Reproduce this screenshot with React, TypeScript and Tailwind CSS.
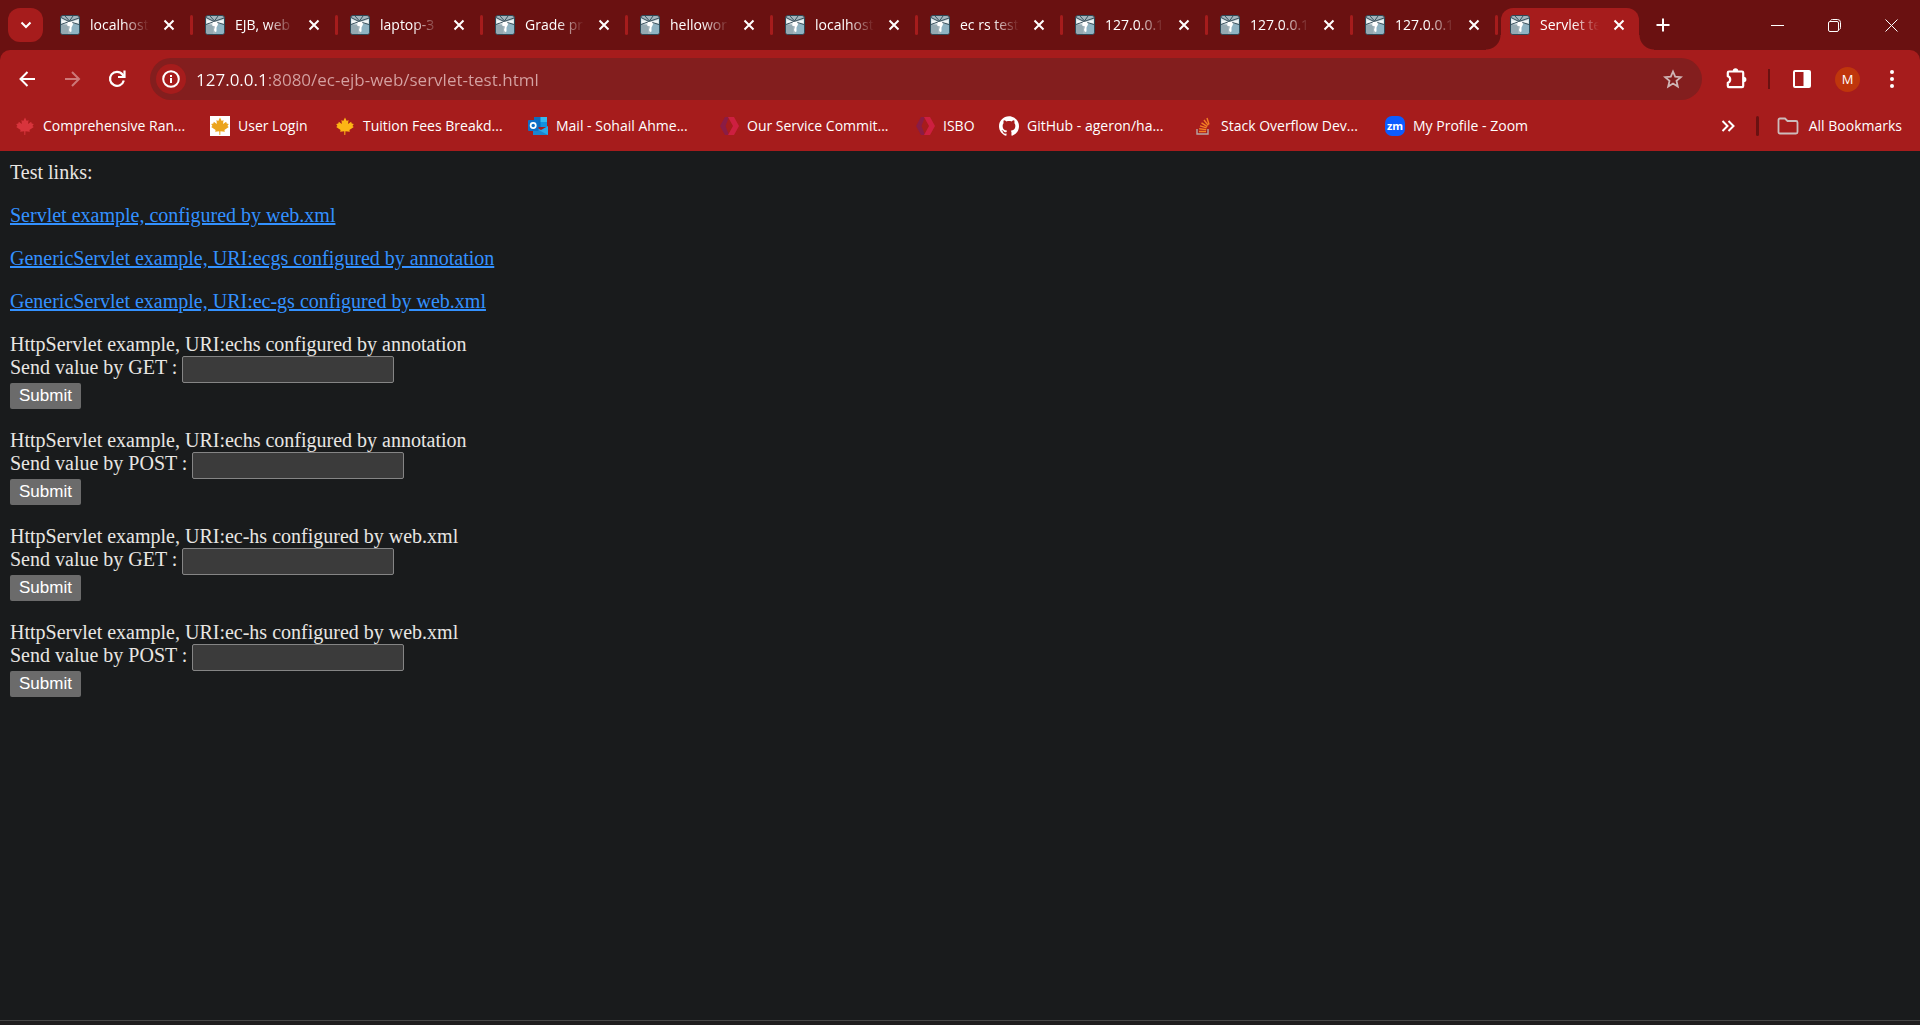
import React from "react";
import { SiGithub } from "react-icons/si";

const tabs = [
  "localhost",
  "EJB, web",
  "laptop-3",
  "Grade pr",
  "hellowor",
  "localhost",
  "ec rs test",
  "127.0.0.1",
  "127.0.0.1",
  "127.0.0.1",
  "Servlet te",
];

function WildFlyIcon() {
  return (
    <svg viewBox="0 0 20 20" className="size-5 shrink-0" aria-hidden="true">
      <rect x="0.5" y="0.5" width="19" height="19" rx="2.5" fill="#a3b4bc" stroke="#2f4a58" />
      <path d="M11 9h8v8q0 2-2 2h-6z" fill="#8fb3c3" />
      <path d="M1 10h7v9H3q-2 0-2-2z" fill="#95a9b2" />
      <path d="M1 3l7 3.500h3L19 4v5l-7-.5-3 1L1 9z" fill="#dbe4e8" />
      <path d="M1 2.500l8 4 10-3.500M1 9.500l8-3 10 3M5 1l4.500 5L13 1" fill="none" stroke="#3b525e" />
      <path d="M2 5.500l6 1-6 1.500zM18 5.500l-6 1 6 1.500z" fill="#f4f7f8" />
      <path d="M8 7l4-.5 1 3-1.500 3v4l-1.500.5-1-2 1-3.500-3-1z" fill="#fff" />
    </svg>
  );
}

function CloseIcon({ className }: { className: string }) {
  return (
    <svg viewBox="0 0 12 12" className={className} stroke="currentColor" strokeWidth="2" aria-hidden="true">
      <path d="M1.5 1.5l9 9M10.500 1.500l-9 9" />
    </svg>
  );
}

function Tab({ title, active }: { title: string; active: boolean }) {
  return (
    <div className="relative flex h-[42px] w-[145px] min-w-0 items-center pb-2 pl-3">
      {active && (
        <>
          <span className="absolute inset-y-0 right-[4px] left-[3px] rounded-t-xl bg-[#a61c1c]" />
          <span className="absolute bottom-0 -left-3 size-[15px] bg-[radial-gradient(circle_at_0_0,transparent_14px,#a61c1c_15px)]" />
          <span className="absolute -right-[11px] bottom-0 size-[15px] bg-[radial-gradient(circle_at_100%_0,transparent_14px,#a61c1c_15px)]" />
        </>
      )}
      <button className="relative flex min-w-0 items-center gap-[10px] text-left">
        <WildFlyIcon />
        <span className="w-[59px] overflow-hidden text-sm leading-5 whitespace-nowrap [mask-image:linear-gradient(to_right,#000_55%,transparent)]">
          {title}
        </span>
      </button>
      <button aria-label="Close tab" className="relative ml-[10px] grid size-5 shrink-0 place-items-center">
        <CloseIcon className="size-3" />
      </button>
      {!active && <span className="ml-auto h-5 w-[3px] shrink-0 rounded-full bg-[#a61c1c]" />}
    </div>
  );
}

const leaf =
  "M10 0l2 4 2-1-.6 4.6L17 5l.6 2 2.400.4-1.600 2.400L20 11l-5 3.400.5 1.800-5-.5-.2 4.300h-1l-.2-4.300-4.600.5.5-1.800L0 11l1.400-1.200L0 7.400 2.400 7 3 5l3.400 2.600L6 3l2 1z";

function MapleLeaf({ fill, boxed = false }: { fill: string; boxed?: boolean }) {
  return (
    <svg viewBox="0 0 20 20" className="size-5 shrink-0" aria-hidden="true">
      {boxed && <rect width="20" height="20" fill="#fff" />}
      <path d={leaf} fill={fill} transform="translate(1.2 1.4) scale(.88)" />
    </svg>
  );
}

function OutlookIcon() {
  return (
    <svg viewBox="0 0 20 20" className="size-5 shrink-0" aria-hidden="true">
      <path d="M6 1h13v10H6z" fill="#0f6cbd" />
      <path d="M12.500 1H19v5h-6.500z" fill="#35b8f1" />
      <path d="M12.500 6H19v5h-6.500z" fill="#1490df" />
      <path d="M5 10l8 4 7-4v9H5z" fill="#28a8ea" />
      <path d="M5 11l15 8H5z" fill="#1a86d0" />
      <rect y="4" width="10.500" height="11" rx="1" fill="#0f6fc6" />
      <circle cx="5.200" cy="9.500" r="2.600" fill="none" stroke="#fff" strokeWidth="1.700" />
    </svg>
  );
}

function HexIcon() {
  return (
    <svg viewBox="0 0 20 20" className="size-5 shrink-0" aria-hidden="true">
      <path d="M6 1h4L6.500 10 10 19H6L1 10z" fill="#8a1c45" />
      <path d="M9 1h6l5 9-5 9H9l5-9z" fill="#cd1f40" />
    </svg>
  );
}

function StackOverflowIcon() {
  return (
    <svg viewBox="0 0 20 20" className="size-5 shrink-0" fill="none" aria-hidden="true">
      <path d="M4 13v5h11v-5" stroke="#b5a6a6" strokeWidth="1.400" />
      <path
        d="M6 15.500h7M6.200 12.800l7 .8M7 9.800l6.600 2M8.500 6.800l5.800 3.800M11 4l4.200 5.400M14 2l2 6.500"
        stroke="#f48024"
        strokeWidth="1.400"
      />
    </svg>
  );
}

function ZoomIcon() {
  return (
    <span className="grid size-5 shrink-0 place-items-center rounded-[7px] bg-[#0b5cff] text-[11px] leading-3 font-bold" aria-hidden="true">
      zm
    </span>
  );
}

const bookmarks = [
  { label: "Comprehensive Ran...", icon: <MapleLeaf fill="#d8343c" />, width: "w-[195px]" },
  { label: "User Login", icon: <MapleLeaf fill="#eba41c" boxed />, width: "w-[125px]" },
  { label: "Tuition Fees Breakd...", icon: <MapleLeaf fill="#fdb515" />, width: "w-[193px]" },
  { label: "Mail - Sohail Ahme...", icon: <OutlookIcon />, width: "w-[191px]" },
  { label: "Our Service Commit...", icon: <HexIcon />, width: "w-[196px]" },
  { label: "ISBO", icon: <HexIcon />, width: "w-[84px]" },
  { label: "GitHub - ageron/ha...", icon: <SiGithub className="size-5 shrink-0" />, width: "w-[194px]" },
  { label: "Stack Overflow Dev...", icon: <StackOverflowIcon />, width: "w-[192px]" },
  { label: "My Profile - Zoom", icon: <ZoomIcon />, width: "w-[160px]" },
];

function TabStrip() {
  return (
    <div className="flex h-[50px] items-end">
      <button aria-label="Search tabs" className="mr-[5px] mb-2 ml-2 grid h-[34px] w-[35px] shrink-0 place-items-center rounded-xl bg-[#a61c1c]">
        <svg viewBox="0 0 12 8" className="h-2 w-3" fill="none" stroke="currentColor" strokeWidth="2" aria-hidden="true">
          <path d="M1.500 1.500L6 6l4.500-4.500" />
        </svg>
      </button>
      {tabs.map((t, i) => (
        <Tab key={i} title={t} active={i === tabs.length - 1} />
      ))}
      <button aria-label="New tab" className="mb-[15px] ml-[10px] grid size-5 shrink-0 place-items-center">
        <svg viewBox="0 0 14 14" className="size-3.5" stroke="currentColor" strokeWidth="2" aria-hidden="true">
          <path d="M7 .5v13M.5 7h13" />
        </svg>
      </button>
      <div className="ml-auto flex h-[50px] shrink-0">
        <button aria-label="Minimize" className="grid w-[57px] place-items-center">
          <svg viewBox="0 0 13 13" className="size-[13px]" stroke="currentColor" aria-hidden="true">
            <path d="M0 6.500h13" />
          </svg>
        </button>
        <button aria-label="Restore" className="grid w-[57px] place-items-center">
          <svg viewBox="0 0 13 13" className="size-[13px]" fill="none" stroke="currentColor" aria-hidden="true">
            <rect x="0.500" y="2.500" width="10" height="10" rx="1.500" />
            <path d="M2.500 1.500Q3 .5 4.500 .5h5q3 0 3 3V8.500q0 1.500-1 2" />
          </svg>
        </button>
        <button aria-label="Close window" className="grid w-[57px] place-items-center">
          <svg viewBox="0 0 13 13" className="size-[13px]" stroke="currentColor" aria-hidden="true">
            <path d="M.5.5l12 12M12.500.5l-12 12" />
          </svg>
        </button>
      </div>
    </div>
  );
}

function Toolbar() {
  return (
    <div className="flex h-[58px] items-center">
      <div className="flex w-[150px] shrink-0 items-center gap-[25px] pl-[17px]">
        <button aria-label="Back">
          <svg viewBox="0 0 20 20" className="size-5" fill="none" stroke="currentColor" strokeWidth="2" aria-hidden="true">
            <path d="M18 10H4M10.500 3L3.500 10l7 7" />
          </svg>
        </button>
        <button aria-label="Forward" className="text-[#cd7878]">
          <svg viewBox="0 0 20 20" className="size-5" fill="none" stroke="currentColor" strokeWidth="2" aria-hidden="true">
            <path d="M3 10h14M10 3l7 7-7 7" />
          </svg>
        </button>
        <button aria-label="Reload">
          <svg viewBox="0 0 20 20" className="size-5" fill="none" stroke="currentColor" strokeWidth="2.200" aria-hidden="true">
            <path d="M16.800 11.500A7 7 0 1 1 15.500 5.500L17 7.500" />
            <path d="M17.500 1.500v6.500h-6.500" />
          </svg>
        </button>
      </div>
      <div className="flex h-[42px] min-w-0 flex-1 items-center rounded-full bg-[#831e1e] pr-[19px] pl-[6px]">
        <button aria-label="View site information" className="grid size-[30px] shrink-0 place-items-center rounded-full bg-[#a61c1c]">
          <svg viewBox="0 0 18 18" className="size-[18px]" fill="none" stroke="currentColor" strokeWidth="2" aria-hidden="true">
            <circle cx="9" cy="9" r="7.800" />
            <path d="M9 8v5M9 5v2" />
          </svg>
        </button>
        <input
          aria-label="Address and search bar"
          defaultValue="127.0.0.1:8080/ec-ejb-web/servlet-test.html"
          className="ml-[10px] h-8 min-w-0 flex-1 bg-[linear-gradient(to_right,#ffffff_72px,#d5a2a2_72px)] bg-clip-text text-[17px] text-[#d5a2a2] outline-none [-webkit-text-fill-color:transparent]"
        />
        <button aria-label="Bookmark this page" className="text-[#cfb5b5]">
          <svg viewBox="0 0 20 20" className="size-5" fill="none" stroke="currentColor" strokeWidth="1.800" aria-hidden="true">
            <path d="M10 2.500l2.200 5.200 5.600.5-4.300 3.700 1.300 5.600-4.800-3-4.800 3 1.300-5.600L2.200 8.200l5.600-.5z" />
          </svg>
        </button>
      </div>
      <div className="flex w-[218px] shrink-0 items-center pl-[22px]">
        <button aria-label="Extensions">
          <svg viewBox="0 0 24 24" className="size-6" fill="none" stroke="currentColor" strokeWidth="2.200" strokeLinejoin="round" aria-hidden="true">
            <path d="M5 4.500h13q1.200 0 1.200 1.200V19q0 1.200-1.200 1.200H5q-1.200 0-1.200-1.200v-3.300c3.200-.8 3.200-5.600 0-6.400V5.700q0-1.200 1.200-1.200z" />
            <path d="M8.800 4a2.700 2.700 0 0 1 5.400 0zM19.700 9.800a2.700 2.700 0 0 1 0 5.400z" fill="currentColor" strokeWidth="0" />
          </svg>
        </button>
        <span className="ml-[20px] h-5 w-0.5 bg-[#6a1111]" />
        <button aria-label="Side panel" className="ml-[22px]">
          <svg viewBox="0 0 20 20" className="size-5" fill="none" stroke="currentColor" strokeWidth="2" aria-hidden="true">
            <rect x="2" y="2" width="16" height="16" rx="1" />
            <path d="M11.500 2H18v16h-6.500z" fill="currentColor" stroke="none" />
          </svg>
        </button>
        <button aria-label="Profile" className="ml-[23px] grid size-[25px] place-items-center rounded-full bg-[#bf360c] text-[13px] leading-4">
          M
        </button>
        <button aria-label="Menu" className="ml-[22px]">
          <svg viewBox="0 0 20 20" className="size-5" fill="currentColor" aria-hidden="true">
            <circle cx="10" cy="3" r="2" />
            <circle cx="10" cy="10" r="2" />
            <circle cx="10" cy="17" r="2" />
          </svg>
        </button>
      </div>
    </div>
  );
}

function BookmarksBar() {
  return (
    <div className="flex h-[43px] items-center pr-[18px] pb-2 pl-[15px] text-sm leading-5 whitespace-nowrap">
      {bookmarks.map((b) => (
        <div key={b.label} className={b.width}>
          <a href="#" className="flex w-fit items-center gap-2">
            {b.icon}
            {b.label}
          </a>
        </div>
      ))}
      <button aria-label="More bookmarks" className="ml-auto">
        <svg viewBox="0 0 14 12" className="h-3 w-3.5" fill="none" stroke="currentColor" strokeWidth="2" aria-hidden="true">
          <path d="M1.500 1L6.500 6l-5 5M7.500 1l5 5-5 5" />
        </svg>
      </button>
      <span className="ml-[21px] h-5 w-[3px] rounded-full bg-[#6a1111]" />
      <button className="ml-[18px] flex items-center gap-[10px]">
        <svg viewBox="0 0 22 18" className="h-[18px] w-[22px]" fill="none" stroke="#cdbcbc" strokeWidth="1.800" aria-hidden="true">
          <path d="M1.500 3q0-1.500 1.500-1.500h5L10.500 4H19q1.500 0 1.500 1.500V15q0 1.500-1.500 1.500H3q-1.500 0-1.500-1.500z" />
        </svg>
        All Bookmarks
      </button>
    </div>
  );
}

const links = [
  "Servlet example, configured by web.xml",
  "GenericServlet example, URI:ecgs configured by annotation",
  "GenericServlet example, URI:ec-gs configured by web.xml",
];

const forms = [
  { title: "HttpServlet example, URI:echs configured by annotation", method: "GET" },
  { title: "HttpServlet example, URI:echs configured by annotation", method: "POST" },
  { title: "HttpServlet example, URI:ec-hs configured by web.xml", method: "GET" },
  { title: "HttpServlet example, URI:ec-hs configured by web.xml", method: "POST" },
];

export default function App() {
  return (
    <div className="flex min-h-screen flex-col bg-[#191b1c]">
      <header className="bg-[#6a1111] font-['Open_Sans',sans-serif] text-white">
        <TabStrip />
        <div className="rounded-t-[10px] bg-[#a61c1c]">
          <Toolbar />
          <BookmarksBar />
        </div>
      </header>
      <main className="flex flex-1 flex-col gap-5 p-[10px] font-['Liberation_Serif',serif] text-xl leading-[23px] text-[#e8e6e3]">
        <p>Test links:</p>
        {links.map((l) => (
          <p key={l}>
            <a href="#" className="text-[#3391ff] underline">
              {l}
            </a>
          </p>
        ))}
        {forms.map((f, i) => (
          <form key={i} onSubmit={(e) => e.preventDefault()}>
            <p>{f.title}</p>
            <div className="flex items-start gap-[5px]">
              <label htmlFor={`value-${i}`}>Send value by {f.method} :</label>
              <input
                id={`value-${i}`}
                type="text"
                className="h-[27px] w-[212px] rounded-xs border border-[#858585] bg-[#3b3b3b] px-1 text-base"
              />
            </div>
            <button className="block h-[26px] rounded-xs bg-[#6b6b6b] px-[9px] font-['Liberation_Sans',sans-serif] text-[17px] leading-6 text-white">
              Submit
            </button>
          </form>
        ))}
      </main>
      <footer className="h-[5px] border-t border-[#454545] bg-[#1f1d1e]" />
    </div>
  );
}
